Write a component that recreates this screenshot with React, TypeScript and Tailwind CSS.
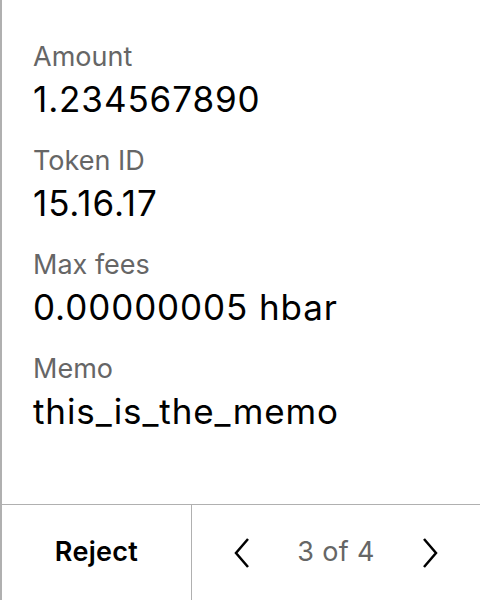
import React from "react";

const items = [
  { label: "Amount", value: "1.234567890" },
  { label: "Token ID", value: "15.16.17" },
  { label: "Max fees", value: "0.00000005 hbar" },
  { label: "Memo", value: "this_is_the_memo" },
];

export default function App() {
  return (
    <div
      className="w-[480px] h-[600px] bg-white flex flex-col border-l-2 border-[#b0b0b0]"
      style={{ fontFamily: "Inter, 'Noto Sans', sans-serif" }}
    >
      <div className="flex-1 flex flex-col gap-[20px] pl-[31px] pt-[39px]">
        {items.map((it) => (
          <div key={it.label} className="flex flex-col">
            <div className="text-[27px] leading-[36px] text-[#666666]">{it.label}</div>
            <div className="text-[35px] leading-[48px] tracking-[0.9px] text-black">{it.value}</div>
          </div>
        ))}
      </div>
      <div className="h-[96px] flex border-t border-[#b0b0b0]">
        <div className="w-[190px] flex items-center justify-center border-r border-[#b0b0b0]">
          <span className="text-[27px] font-semibold tracking-[0.3px] text-black">Reject</span>
        </div>
        <div className="flex-1 flex items-center justify-between px-[40px]">
          <svg width="20" height="32" viewBox="0 0 20 32" fill="none" stroke="black" strokeWidth="2.5">
            <path d="M16 2 L4 16 L16 30" />
          </svg>
          <span className="text-[27px] tracking-[0.3px] text-[#666666]">3 of 4</span>
          <svg width="20" height="32" viewBox="0 0 20 32" fill="none" stroke="black" strokeWidth="2.5">
            <path d="M4 2 L16 16 L4 30" />
          </svg>
        </div>
      </div>
    </div>
  );
}
